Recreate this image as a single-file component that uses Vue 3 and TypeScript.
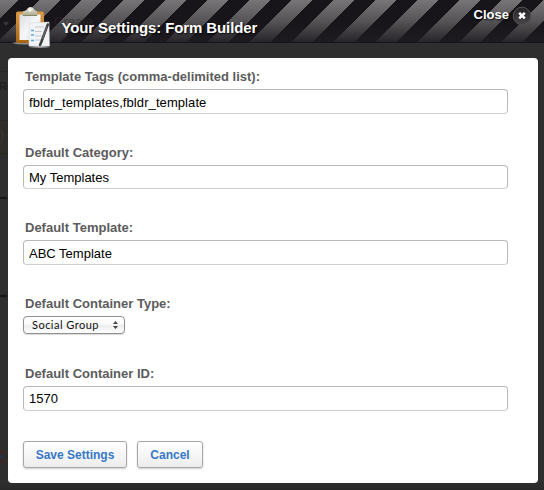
<script setup lang="ts">
import { ref } from 'vue'

interface Field {
  id: string
  label: string
  value: string
  kind: 'text' | 'select'
}

const fields = ref<Field[]>([
  { id: 'tags', label: 'Template Tags (comma-delimited list):', value: 'fbldr_templates,fbldr_template', kind: 'text' },
  { id: 'category', label: 'Default Category:', value: 'My Templates', kind: 'text' },
  { id: 'template', label: 'Default Template:', value: 'ABC Template', kind: 'text' },
  { id: 'type', label: 'Default Container Type:', value: 'Social Group', kind: 'select' },
  { id: 'container', label: 'Default Container ID:', value: '1570', kind: 'text' },
])
</script>

<template>
  <div class="dialog">
    <div class="behind" aria-hidden="true">
      <i class="line l1"></i><span class="ghost">Re</span><i class="band"></i><i class="stub"></i>
      <i class="line l2"></i><i class="line l3"></i><i class="chip"></i><i class="corner"></i>
    </div>
    <header class="header">
      <svg class="logo" width="42" height="46" viewBox="0 0 42 46">
        <defs>
          <linearGradient id="wood" x1="0" y1="0" x2="0" y2="1">
            <stop offset="0" stop-color="#d99a45" /><stop offset="1" stop-color="#a96512" />
          </linearGradient>
          <linearGradient id="sheet" x1="0" y1="0" x2="1" y2="1">
            <stop offset="0" stop-color="#d9dbe0" /><stop offset=".5" stop-color="#f6f7f9" /><stop offset="1" stop-color="#dfe3e8" />
          </linearGradient>
          <linearGradient id="metal" x1="0" y1="0" x2="0" y2="1">
            <stop offset="0" stop-color="#efeddc" /><stop offset="1" stop-color="#aaa98a" />
          </linearGradient>
        </defs>
        <path d="M1 41Q8 38.500 22 40V42Q9 43.500 1 41Z" fill="#8a8c8e" />
        <rect x="5" y="9.500" width="28" height="31.500" rx="2" fill="url(#wood)" />
        <path d="M8.500 12.500H29.500V38H8.500Z" fill="url(#sheet)" />
        <path d="M11.500 13.500V10.800Q11.500 9 14.500 8.500Q16 8 16.500 6.500Q17.500 5 19.500 5Q21.500 5 22.500 6.500Q23 8 24.500 8.500Q26.500 9 26.500 11V13.500Z" fill="url(#metal)" />
        <circle cx="19" cy="8" r="1.600" fill="#fff" />
        <path d="M12 13.500H26" stroke="#85856d" />
        <path d="M17 45Q29 43 39.500 45Q30 46.500 17 45Z" fill="#b5b7b8" />
        <path d="M18 21L38 20L38.500 44H18Z" fill="#f1f3f5" stroke="#d0d4d8" stroke-width=".5" />
        <path d="M24 25H33M24 29.500H31M24 34H31M24 38H30" stroke="#c4c9cf" />
        <path d="M20 28.500H23M20 33H23M20 38.500H23" stroke="#55a9dc" stroke-width="1.700" />
        <path d="M36.800 22.500L30.500 39.500L29 43" stroke="#3c3e42" stroke-width="2.500" stroke-linecap="round" fill="none" />
        <path d="M36 24.500L31.500 37" stroke="#8f9398" stroke-width=".6" />
      </svg>
      <i class="ghost-arrow" aria-hidden="true"></i>
      <span class="ghost-create" aria-hidden="true">Create</span>
      <h1 class="title">Your Settings: Form Builder</h1>
      <button class="close" type="button">
        <span>Close</span>
        <svg width="20" height="20" viewBox="0 0 20 20">
          <defs>
            <linearGradient id="knob" x1="0" y1="0" x2="0" y2="1">
              <stop offset="0" stop-color="#252326" /><stop offset="1" stop-color="#49474a" />
            </linearGradient>
          </defs>
          <circle cx="10" cy="10" r="8.800" fill="url(#knob)" stroke="#525053" />
          <path d="M7.200 6.800L12.800 12.400M12.800 6.800L7.200 12.400" stroke="#fff" stroke-width="2.500" />
        </svg>
      </button>
    </header>

    <form class="panel" @submit.prevent>
      <div v-for="f in fields" :key="f.id" class="field" :class="[f.kind, f.id]">
        <label :for="f.id"><span>{{ f.label }}</span></label>
        <input v-if="f.kind === 'text'" :id="f.id" v-model="f.value" type="text" spellcheck="false" />
        <button v-else :id="f.id" type="button" class="popup">
          <span>{{ f.value }}</span>
          <svg width="5" height="8" viewBox="0 0 5 8"><path d="M2.500 0L5 3H0ZM2.500 8L0 5H5Z" fill="#444" /></svg>
        </button>
      </div>
      <div class="actions">
        <button class="btn save" type="submit">Save Settings</button>
        <button class="btn cancel" type="button">Cancel</button>
      </div>
    </form>
  </div>
</template>

<style>
body { background: #2e2e2e; overflow: hidden; }
</style>

<style scoped>
* { box-sizing: border-box; }
.dialog {
  position: relative;
  width: 544px;
  height: 490px;
  overflow: hidden;
  background: #2e2e2e;
  font-family: "Liberation Sans", Helvetica, Arial, sans-serif;
}
button { font-family: inherit; margin: 0; }
.behind i, .ghost { position: absolute; display: block; }
.behind .line { left: 0; width: 7px; height: 1px; background: #262626; }
.behind .l1 { top: 71px; }
.behind .l2 { top: 197px; height: 2px; background: #171717; }
.behind .l3 { top: 295px; height: 2px; background: #171717; }
.ghost { left: -1px; top: 80px; font-size: 11px; line-height: 13px; font-weight: bold; color: #202020; }
.band { left: 0; top: 120px; width: 7px; height: 34px; background: #302e29; border-top: 1px solid #282828; border-bottom: 1px solid #292720; }
.stub { left: -5px; top: 130px; width: 8px; height: 14px; border: 1px solid #3a3935; border-radius: 3px; }
.chip { left: 0; top: 450px; width: 4px; height: 13px; background: linear-gradient(#352a2a 35%, #26344a 35% 70%, #352a2a 70%); border: 1px solid #4a2222; border-left: 0; }
.corner { left: 0; top: 482px; width: 544px; height: 8px; background: linear-gradient(#2e2e2e, #292929); }

.header {
  position: relative;
  display: flex;
  align-items: flex-start;
  height: 58px;
  padding-left: 11px;
}
.header::before {
  content: "";
  position: absolute;
  inset: 0 0 auto;
  height: 42px;
  border-bottom: 1px solid #171519;
  background:
    linear-gradient(rgba(24, 21, 26, 0) 0, rgba(24, 21, 26, .35) 50%, rgba(30, 28, 32, .9) 100%),
    repeating-linear-gradient(135deg, #777577 0 13.08px, #18151a 13.08px 27.93px, #777577 27.93px 29.698px);
}
.logo, .title, .close { position: relative; }
.logo { flex: none; margin-top: 2px; }
.ghost-arrow {
  position: absolute;
  left: 3px;
  top: 22px;
  border: 3px solid transparent;
  border-top: 4px solid #38363a;
}
.ghost-create {
  position: absolute;
  left: 54px;
  top: 14px;
  font-size: 13px;
  line-height: 16px;
  color: rgba(44, 42, 46, .6);
}
.title {
  margin: 17px 0 0 8.500px;
  font-size: 15px;
  line-height: 22px;
  letter-spacing: -.12px;
  color: #fff;
  white-space: nowrap;
  text-shadow: 1px 1px 2px #000;
}
.close {
  display: flex;
  align-items: flex-start;
  gap: 3px;
  margin: 5px 12px 0 auto;
  padding: 0;
  border: 0;
  background: none;
  color: #fff;
  font-size: 13px;
  font-weight: bold;
  line-height: 19px;
  text-shadow: 1px 1px 2px #000;
}
.close svg { margin-top: 1px; }

.panel {
  position: relative;
  width: 530px;
  height: 425px;
  margin-left: 8px;
  padding: 10px 0 0 15px;
  border-radius: 4px;
  background: #fff;
}
.field { height: 76px; }
.field.category { height: 75px; }
.field.select { height: 70px; }
label {
  display: block;
  height: 21px;
  padding-left: 2px;
  font-size: 13px;
  font-weight: bold;
  line-height: 17px;
  color: #5c5c5c;
}
input {
  display: block;
  width: 485px;
  height: 25px;
  padding: 1px 5px 0;
  border: 1px solid #b9b9b9;
  border-bottom-color: #d0d0d0;
  border-radius: 4px;
  outline: 0;
  background: #fff;
  color: #000;
  font: 13px "Liberation Sans", Helvetica, Arial, sans-serif;
}
.category input { height: 24px; }
.tags input { letter-spacing: .085px; }
.container input { padding: 0 5px 1px; }
.popup {
  display: flex;
  align-items: center;
  justify-content: space-between;
  width: 102px;
  height: 18px;
  padding: 0 6px 0 8px;
  border: 1px solid #8f8f8f;
  border-radius: 4px;
  background: linear-gradient(#fff, #fafafa 45%, #ededed 55%, #fff);
  box-shadow: 0 1px 1px rgba(0, 0, 0, .15);
  color: #111;
  font: 11px Lato, "Open Sans", sans-serif;
  letter-spacing: .48px;
}
.popup span { padding-bottom: 2px; }
.actions { display: flex; gap: 10px; }
.btn {
  height: 27px;
  padding: 1px 0 0;
  border: 1px solid #a6a6a6;
  border-radius: 3px;
  background: linear-gradient(#fff, #ededed);
  box-shadow: 0 1px 2px rgba(0, 0, 0, .2);
  color: #3778c7;
  font-size: 12px;
  font-weight: bold;
}
.save { width: 104px; }
.cancel { width: 66px; }
</style>
